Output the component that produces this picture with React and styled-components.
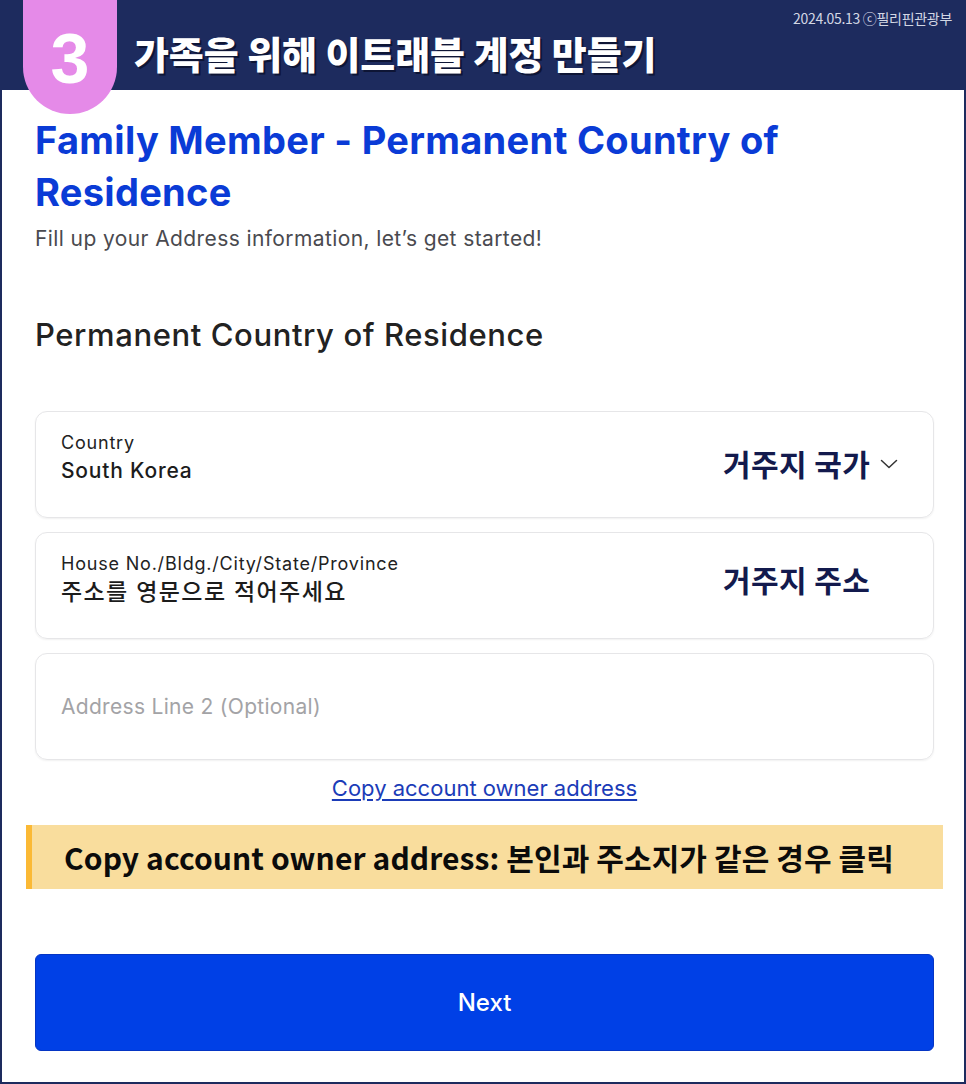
import React from 'react';
import styled, { createGlobalStyle } from 'styled-components';

const Global = createGlobalStyle`
  * { box-sizing: border-box; }
  body {
    margin: 0;
    background: #fff;
    font-family: "Inter", "Noto Sans CJK KR", sans-serif;
  }
`;

const Frame = styled.div`
  position: relative;
  width: 966px;
  height: 1084px;
  border: 2px solid #1d2b5e;
  border-top: none;
  background: #fff;
  overflow: hidden;
`;

const Banner = styled.header`
  height: 90px;
  background: #1d2b5e;
  display: flex;
  align-items: center;
  padding-left: 134px;
  margin: 0 -2px;
`;

const Badge = styled.div`
  position: absolute;
  left: 21px;
  top: 0;
  width: 94px;
  height: 114px;
  background: #e58ae8;
  border-radius: 0 0 47px 47px;
  display: flex;
  justify-content: center;
  padding-top: 24px;
  color: #fff;
  font-family: "Liberation Sans", Arial, sans-serif;
  font-weight: 700;
  font-size: 70px;
  line-height: 70px;
`;

const BannerTitle = styled.h1`
  margin: 0;
  margin-top: 14px;
  color: #fff;
  font-family: "Noto Sans CJK KR", sans-serif;
  font-weight: 900;
  font-size: 38px;
  letter-spacing: -0.1px;
  text-shadow: 2px 2px 0 #0e1535;
`;

const Stamp = styled.span`
  position: absolute;
  top: 8px;
  right: 12px;
  color: #d3d7e4;
  font-family: "Noto Sans CJK KR", sans-serif;
  font-size: 14px;
  letter-spacing: -0.3px;
`;

const Body = styled.main`
  padding: 24px 30px 0 33px;
  display: flex;
  flex-direction: column;
`;

const Heading = styled.h2`
  margin: 0;
  color: #0a3bd6;
  font-size: 38px;
  line-height: 52px;
  font-weight: 700;
  letter-spacing: 0.3px;
  width: 820px;
`;

const Sub = styled.p`
  margin: 7px 0 0;
  color: #4a4a4f;
  font-size: 21px;
  line-height: 28px;
  letter-spacing: 0.4px;
`;

const Section = styled.h3`
  margin: 64px 0 0;
  color: #222;
  font-size: 31px;
  line-height: 36px;
  font-weight: 500;
  letter-spacing: 0.6px;
`;

const Fields = styled.div`
  margin-top: 58px;
  display: flex;
  flex-direction: column;
  gap: 14px;
`;

const Card = styled.div`
  height: 107px;
  border: 1px solid #e6e6e8;
  border-radius: 12px;
  box-shadow: 0 1px 2px rgba(0, 0, 0, 0.06);
  display: flex;
  align-items: center;
  padding: 0 30px 0 25px;
`;

const FieldText = styled.div`
  flex: 1;
  display: flex;
  flex-direction: column;
  margin-bottom: ${p => (p.$raised ? '12px' : '0')};
`;

const Label = styled.span`
  color: #222;
  font-size: 18px;
  line-height: 22px;
  letter-spacing: 0.8px;
`;

const Value = styled.span`
  margin-top: 3px;
  color: #1c1c1c;
  font-size: ${p => (p.$ko ? '23px' : '21px')};
  line-height: 28px;
  font-weight: 500;
  letter-spacing: ${p => (p.$ko ? '1.4px' : '0.8px')};
  font-family: "Inter", "Noto Sans CJK KR", sans-serif;
`;

const Placeholder = styled.span`
  color: #a3a3a6;
  font-size: 21px;
  line-height: 28px;
  letter-spacing: 0.3px;
`;

const Note = styled.div`
  width: 180px;
  flex-shrink: 0;
  display: flex;
  align-items: center;
  gap: 10px;
  margin-bottom: ${p => p.$lift || 0}px;
  white-space: nowrap;
  color: #131a4d;
  font-family: "Noto Sans CJK KR", sans-serif;
  font-weight: 700;
  font-size: 30px;
  letter-spacing: 0.4px;

  svg {
    flex-shrink: 0;
    margin-top: 2px;
  }
`;

const CopyLink = styled.a`
  margin-top: 14px;
  align-self: center;
  color: #1b3cb8;
  font-size: 22px;
  line-height: 28px;
  text-decoration: underline;
  text-underline-offset: 3px;
  cursor: pointer;
`;

const Callout = styled.div`
  margin: 23px -9px 0 -9px;
  height: 64px;
  background: #f9dd9d;
  border-left: 6px solid #fbb935;
  display: flex;
  align-items: center;
  padding-left: 32px;
  color: #0b0b0b;
  font-family: "Noto Sans CJK KR", sans-serif;
  font-weight: 700;
  font-size: 30px;
  letter-spacing: 0.1px;
`;

const NextButton = styled.button`
  margin-top: 65px;
  height: 97px;
  border: 1px solid #0535c4;
  border-radius: 6px;
  background: #0040e6;
  color: #fff;
  font-family: "Inter", sans-serif;
  font-size: 24px;
  font-weight: 500;
  cursor: pointer;
`;

const Chevron = () => (
  <svg width="18" height="10" viewBox="0 0 18 10" fill="none">
    <path d="M1.5 1.5l7.5 7 7.5-7" stroke="#333" strokeWidth="1.5" strokeLinecap="round" strokeLinejoin="round" />
  </svg>
);

export default function App() {
  return (
    <>
      <Global />
      <Frame>
        <Banner>
          <BannerTitle>가족을 위해 이트래블 계정 만들기</BannerTitle>
        </Banner>
        <Badge>3</Badge>
        <Stamp>2024.05.13 ⓒ필리핀관광부</Stamp>
        <Body>
          <Heading>Family Member - Permanent Country of Residence</Heading>
          <Sub>Fill up your Address information, let’s get started!</Sub>
          <Section>Permanent Country of Residence</Section>
          <Fields>
            <Card>
              <FieldText $raised>
                <Label>Country</Label>
                <Value>South Korea</Value>
              </FieldText>
              <Note $lift={4}>
                <span>거주지 국가</span>
                <Chevron />
              </Note>
            </Card>
            <Card>
              <FieldText $raised>
                <Label>House No./Bldg./City/State/Province</Label>
                <Value $ko>주소를 영문으로 적어주세요</Value>
              </FieldText>
              <Note $lift={14}>
                <span>거주지 주소</span>
              </Note>
            </Card>
            <Card>
              <FieldText>
                <Placeholder>Address Line 2 (Optional)</Placeholder>
              </FieldText>
            </Card>
          </Fields>
          <CopyLink>Copy account owner address</CopyLink>
          <Callout>Copy account owner address: 본인과 주소지가 같은 경우 클릭</Callout>
          <NextButton>Next</NextButton>
        </Body>
      </Frame>
    </>
  );
}
